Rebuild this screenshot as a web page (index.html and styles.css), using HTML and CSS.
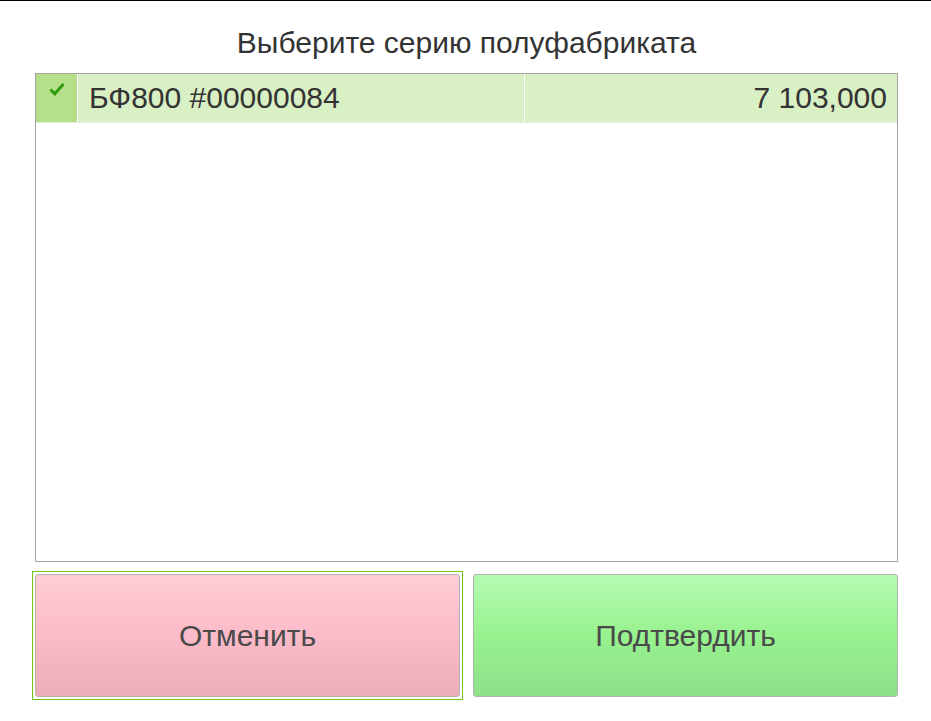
FILE: index.html
```html
<!DOCTYPE html>
<html lang="ru">
<head>
<meta charset="utf-8">
<link rel="stylesheet" href="styles.css">
</head>
<body>
<div class="topline"></div>
<div class="page">
  <div class="title">Выберите серию полуфабриката</div>
  <div class="table">
    <div class="row selected">
      <div class="cell check">
        <svg width="16" height="14" viewBox="0 0 16 14"><path d="M1.5 7.5 L5.8 11.8 L14.5 2" fill="none" stroke="#2f9c0c" stroke-width="3"/></svg>
      </div>
      <div class="cell name">БФ800 #00000084</div>
      <div class="cell qty">7 103,000</div>
    </div>
  </div>
  <div class="buttons">
    <div class="focus">
      <button class="btn cancel">Отменить</button>
    </div>
    <button class="btn confirm">Подтвердить</button>
  </div>
</div>
</body>
</html>
```
FILE: styles.css
```css
html, body {
  margin: 0;
  padding: 0;
  background: #fff;
  font-family: "Liberation Sans", Arial, sans-serif;
  color: #333;
}
.topline {
  height: 1px;
  background: #000;
}
.page {
  padding: 0 33px 0 35px;
  display: flex;
  flex-direction: column;
}
.title {
  height: 72px;
  box-sizing: border-box;
  padding-top: 25px;
  text-align: center;
  font-size: 30px;
  color: #333;
  white-space: nowrap;
}
.table {
  height: 489px;
  box-sizing: border-box;
  border: 1px solid #a4a4a4;
  background: #fff;
}
.row {
  display: flex;
  height: 49px;
  box-sizing: border-box;
  border-bottom: 1px solid #e6ede0;
}
.row.selected {
  background: #d9efc4;
}
.cell {
  display: flex;
  align-items: center;
  box-sizing: border-box;
  font-size: 30px;
  color: #333;
  white-space: nowrap;
}
.check {
  width: 42px;
  background: #b5df89;
  border-right: 1px solid #fff;
  align-items: flex-start;
  justify-content: center;
  padding-top: 8px;
}
.name {
  width: 447px;
  padding-left: 11px;
  border-right: 1px solid #fff;
}
.qty {
  flex: 1;
  justify-content: flex-end;
  padding-right: 10px;
}
.buttons {
  display: flex;
  gap: 10px;
  margin-top: 9px;
}
.focus {
  margin: 0 0 0 -3px;
  border: 1px solid #6fc414;
  padding: 2px;
}
.btn {
  display: block;
  height: 123px;
  border: 1px solid #b3b3b3;
  border-radius: 3px;
  font-family: "Liberation Sans", Arial, sans-serif;
  font-size: 30px;
  color: #4a4a4a;
  padding: 0;
  cursor: pointer;
}
.cancel {
  width: 425px;
  background: linear-gradient(#fecdd6, #fbbbc8 50%, #ecadb9);
}
.confirm {
  flex: 1;
  margin-top: 3px;
  background: linear-gradient(#b4fbb1, #97f28f 50%, #8de189);
}
```
